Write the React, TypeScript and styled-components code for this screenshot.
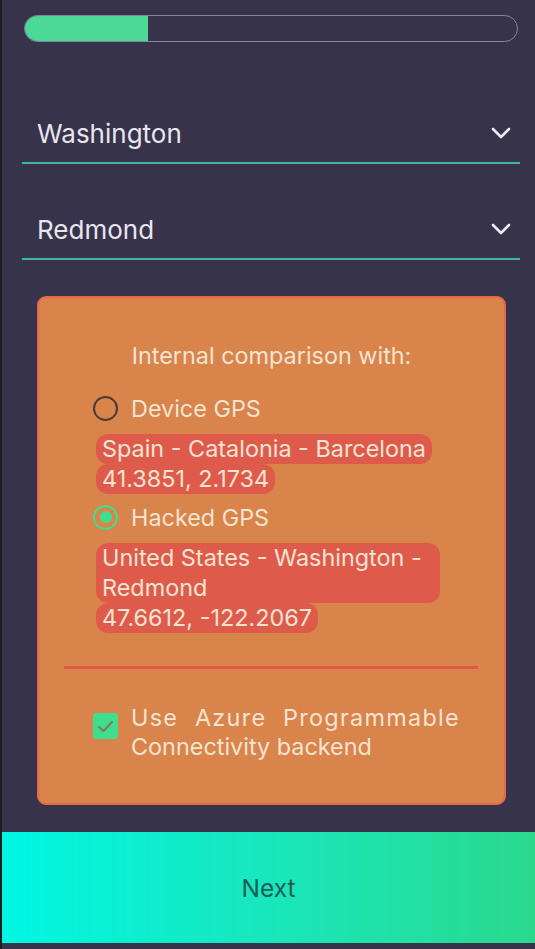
import styled, { createGlobalStyle } from "styled-components";

const GlobalStyle = createGlobalStyle`
  html, body {
    margin: 0;
    padding: 0;
    background: #37334a;
  }
  * {
    box-sizing: border-box;
  }
`;

const Page = styled.main`
  width: 535px;
  height: 949px;
  background: #37334a;
  border-left: 2px solid #1f1c2a;
  font-family: Inter, "Noto Sans", sans-serif;
  overflow: hidden;
  display: flex;
  flex-direction: column;
`;

const Content = styled.div`
  padding: 15px 15px 0 20px;
  display: flex;
  flex-direction: column;
`;

const Progress = styled.div`
  margin: 0 2px;
  height: 27px;
  border: 1.5px solid #8b86a0;
  border-radius: 14px;
  overflow: hidden;
`;

const ProgressFill = styled.div`
  height: 100%;
  background: #4cd897;
`;

const Field = styled.div<{ $top: number }>`
  margin-top: ${({ $top }) => $top}px;
  height: 60px;
  padding: 0 8px 0 15px;
  display: flex;
  align-items: center;
  justify-content: space-between;
  border-bottom: 2px solid #3fb2a2;
  color: #e8e5ef;
  font-size: 26px;
`;

const Chevron = () => (
  <svg width="22" height="14" viewBox="0 0 22 14">
    <polyline
      points="3,3 11,11 19,3"
      fill="none"
      stroke="#ece9f3"
      strokeWidth="2.6"
      strokeLinecap="round"
      strokeLinejoin="round"
    />
  </svg>
);

const Card = styled.section`
  margin: 36px 14px 0 15px;
  height: 509px;
  background: #d8844b;
  border: 2px solid #e2694b;
  border-radius: 9px;
  padding-top: 45px;
  color: #f6e3d2;
`;

const Title = styled.div`
  text-align: center;
  font-size: 23.4px;
  line-height: 26px;
`;

const Options = styled.div`
  padding: 0 44px 0 54px;
  margin-top: 24px;
`;

const RadioRow = styled.div<{ $top: number }>`
  margin-top: ${({ $top }) => $top}px;
  height: 30px;
  display: flex;
  align-items: center;
  gap: 13px;
  font-size: 23.4px;
`;

const Radio = styled.span<{ $checked?: boolean }>`
  width: 25px;
  height: 25px;
  border-radius: 50%;
  border: 2.5px solid ${({ $checked }) => ($checked ? "#3fdd8d" : "#4a3b36")};
  display: flex;
  align-items: center;
  justify-content: center;
  &::after {
    content: "";
    width: 12px;
    height: 12px;
    border-radius: 50%;
    background: ${({ $checked }) => ($checked ? "#3fdd8d" : "transparent")};
  }
`;

const Pills = styled.div`
  margin: 11px 0 0 3px;
`;

const Pill = styled.div`
  width: fit-content;
  max-width: 344px;
  padding: 0 6px;
  background: #de5b4b;
  border-radius: 12px;
  font-size: 23.4px;
  line-height: 30px;
`;

const Divider = styled.hr`
  margin: 33px 26px 0 25px;
  border: none;
  height: 3px;
  background: #e3574a;
`;

const CheckRow = styled.label`
  margin: 34px 44px 0 54px;
  display: flex;
  align-items: flex-start;
  gap: 13px;
`;

const CheckBox = styled.span`
  flex: none;
  margin-top: 10px;
  width: 25px;
  height: 26px;
  border-radius: 3px;
  background: #3fdd8d;
  display: flex;
  align-items: center;
  justify-content: center;
`;

const CheckText = styled.span`
  flex: 1;
  text-align: justify;
  font-size: 23.4px;
  line-height: 29px;
  &::first-line {
    letter-spacing: 1.3px;
  }
`;

const NextButton = styled.button`
  margin-top: 27px;
  height: 111px;
  width: 100%;
  border: none;
  background: linear-gradient(90deg, #00f6e3 0%, #16e8c0 45%, #2bd98d 100%);
  color: #1d5d58;
  font-family: Inter, "Noto Sans", sans-serif;
  font-size: 24.5px;
  flex: none;
`;

export default function App() {
  const progress = 25;
  return (
    <>
      <GlobalStyle />
      <Page>
        <Content>
          <Progress>
            <ProgressFill style={{ width: `${progress}%` }} />
          </Progress>
          <Field $top={62}>
            <span>Washington</span>
            <Chevron />
          </Field>
          <Field $top={36}>
            <span>Redmond</span>
            <Chevron />
          </Field>
          <Card>
            <Title>Internal comparison with:</Title>
            <Options>
              <RadioRow $top={0}>
                <Radio />
                <span>Device GPS</span>
              </RadioRow>
              <Pills>
                <Pill>Spain - Catalonia - Barcelona</Pill>
                <Pill>41.3851, 2.1734</Pill>
              </Pills>
              <RadioRow $top={8}>
                <Radio $checked />
                <span>Hacked GPS</span>
              </RadioRow>
              <Pills>
                <Pill>United States - Washington - Redmond</Pill>
                <Pill>47.6612, -122.2067</Pill>
              </Pills>
            </Options>
            <Divider />
            <CheckRow>
              <CheckBox>
                <svg width="17" height="13" viewBox="0 0 17 13">
                  <polyline
                    points="2,7 6.5,11 15,2"
                    fill="none"
                    stroke="#7a7d5a"
                    strokeWidth="2"
                    strokeLinecap="round"
                    strokeLinejoin="round"
                  />
                </svg>
              </CheckBox>
              <CheckText>Use Azure Programmable Connectivity backend</CheckText>
            </CheckRow>
          </Card>
        </Content>
        <NextButton>Next</NextButton>
      </Page>
    </>
  );
}
